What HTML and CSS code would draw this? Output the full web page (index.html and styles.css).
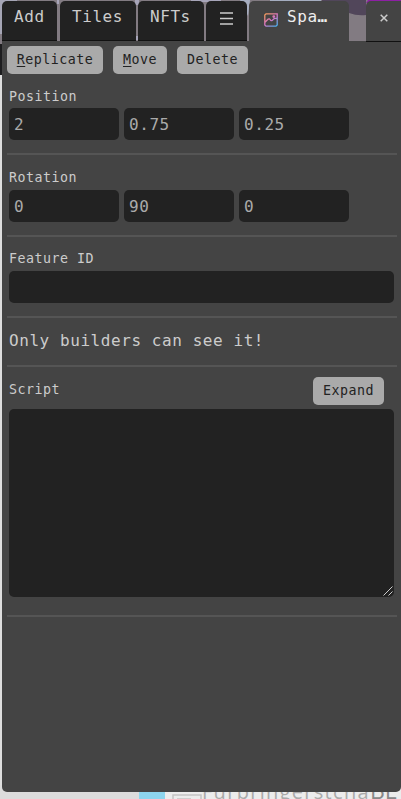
FILE: index.html
```
<!DOCTYPE html>
<html lang="en">
<head>
<meta charset="utf-8">
<title>Feature editor</title>
<link rel="stylesheet" href="styles.css">
</head>
<body>
<div class="scene">
  <svg class="sky" width="401" height="42" viewBox="0 0 401 42">
    <rect width="401" height="42" fill="#827b82"/>
    <path d="M0 0h17v4L3 20v14H0z" fill="#a5a5b5"/>
    <path d="M57 0h2v4h-2zM135 0h4v5h-4zM135 36h4v4h-4zM191 0h30v2h-30z" fill="#a7a5b9"/>
    <path d="M240 0h10l-2 16zM270 0h51v2h-51z" fill="#a5adc0"/>
    <path d="M322 0h44v15q-9 1-17-2l-27-9z" fill="#51465a"/>
    <path d="M368 0h33v3h-35z" fill="#8d20a4"/>
  </svg>
  <div class="ground">
    <span class="water"></span>
    <svg class="block" width="30" height="7" viewBox="0 0 30 7"><path d="M1 7V3h28v4M5 7h14" fill="none" stroke="#c4c4c4" stroke-width="1.5"/></svg>
    <span class="street">Furbringerstcha</span><span class="city">BE</span>
  </div>
</div>
<main class="panel">
  <nav class="tabs">
    <span class="tab add">Add</span>
    <span class="tab tiles">Tiles</span>
    <span class="tab nfts">NFTs</span>
    <span class="tab menu"><svg width="14" height="13" viewBox="0 0 14 13"><path d="M0 1h13M0 6.5h13M0 12h13" stroke="#ccc" stroke-width="1.6"/></svg></span>
    <span class="tab active">
      <svg width="14" height="14" viewBox="0 0 14 14" fill="none" stroke="url(#g)" stroke-width="1.3">
        <defs><linearGradient id="g" gradientUnits="userSpaceOnUse" x1="1" y1="0" x2="12" y2="14"><stop offset="0" stop-color="#f6a04e"/><stop offset=".5" stop-color="#d974c4"/><stop offset="1" stop-color="#42b3ef"/></linearGradient></defs>
        <path d="M2 .8h11.2v11.2l-1.2 1.2H2L.8 12V2zM1 9.3l3.2-3.2q1.3-.8 2 .6t2 .8l2-2 3 -.3"/><circle cx="9.8" cy="3.6" r=".8"/>
      </svg>
      <span class="title">Spa<span class="dots">…</span></span>
    </span>
    <span class="tab close"><svg width="8" height="8" viewBox="0 0 8 8"><path d="M.7.7l6.6 6.6M7.3.7L.7 7.3" stroke="#ccc" stroke-width="1.5"/></svg></span>
  </nav>
  <div class="body">
    <div class="actions">
      <button class="btn replicate"><u>R</u>eplicate</button>
      <button class="btn move"><u>M</u>ove</button>
      <button class="btn delete">Delete</button>
    </div>
    <section class="field position">
      <label>Position</label>
      <div class="inputs"><input value="2"><input value="0.75"><input value="0.25"></div>
    </section>
    <section class="field rotation">
      <label>Rotation</label>
      <div class="inputs"><input value="0"><input value="90"><input value="0"></div>
    </section>
    <section class="field feature">
      <label>Feature ID</label>
      <div class="inputs"><input class="wide"></div>
    </section>
    <p class="note">Only builders can see it!</p>
    <section class="script">
      <div class="script-head"><label>Script</label><button class="btn expand">Expand</button></div>
      <div class="editor"><svg width="10" height="10" viewBox="0 0 10 10"><path d="M.5 9.5l9-9M5.5 9.5l4-4" stroke="#ccc" stroke-width="1"/></svg></div>
    </section>
  </div>
</main>
</body>
</html>
```
FILE: styles.css
```
* { box-sizing: border-box; }
body {
  margin: 0;
  width: 401px;
  height: 799px;
  overflow: hidden;
  position: relative;
  background: linear-gradient(#827b82 44px, #1d1d1f 44px, #1d1d1f 75px, #dedede 75px);
  font-family: "DejaVu Sans Mono", monospace;
  font-size: 16px;
  letter-spacing: 0.57px;
  color: #ccc;
}
.scene { position: absolute; inset: 0; }
.sky { display: block; }
.ground {
  position: absolute;
  left: 0;
  top: 785px;
  width: 401px;
  height: 14px;
  overflow: hidden;
  display: flex;
  background: linear-gradient(90deg, #dcdcdc 164px, #ececec 164px);
}
.water { margin-left: 139px; width: 26px; background: #8dd5ee; }
.block { margin: 7px 0 0 7px; }
.street, .city {
  font-family: "Open Sans", sans-serif;
  line-height: 20px;
  margin-top: -3px;
  white-space: nowrap;
  color: #aaa;
}
.street { font-size: 20px; width: 168px; letter-spacing: 1.3px; }
.city { font-size: 23px; color: #888; margin-top: -5px; letter-spacing: 0; }
.panel { position: relative; margin-left: 2px; padding-top: 1px; }
.tabs { display: flex; height: 40px; }
.tab {
  height: 40px;
  background: #222;
  border-radius: 5px 5px 0 0;
  border-bottom: 1px solid #111;
  display: flex;
  justify-content: flex-start;
  line-height: 20px;
  padding-top: 6px;
  padding-left: 12px;
}
.add { width: 55px; margin-right: 3px; }
.tiles { width: 76px; margin-right: 2px; }
.nfts { width: 66px; margin-right: 2px; }
.menu { width: 41px; margin-right: 2px; padding: 11px 0 0 14px; }
.active {
  width: 100px;
  margin-right: 17px;
  background: #444;
  border: 0;
  color: #eee;
  padding-left: 15px;
}
.active svg { margin: 6px 8px 0 0; }
.active .title { margin-left: 1px; }
.dots { font-weight: bold; }
.close { width: 35px; height: 41px; background: #444; border-radius: 5px 0 0; padding: 13px 0 0 14px; }
.body {
  height: 751px;
  background: #444;
  border-radius: 0 0 5px 5px;
  padding: 5px 4px 0 5px;
}
.actions { display: flex; gap: 10px; height: 28px; }
.btn {
  height: 28px;
  border: 0;
  border-radius: 5px;
  padding: 0;
  background: #aaa;
  color: #222;
  font: 13.3px/28px "DejaVu Sans Mono", monospace;
  letter-spacing: 0.5px;
  text-align: center;
}
.btn u { text-underline-offset: 2px; }
.replicate { width: 96px; }
.move { width: 54px; }
.delete { width: 71px; }
.field { border-bottom: 2px solid #555; padding-left: 2px; }
.field label { display: block; height: 22px; line-height: 20px; }
label { font-size: 13.3px; letter-spacing: 0.5px; }
.inputs { display: flex; gap: 5px; }
.position { height: 81px; padding-top: 13px; }
.position label { height: 21px; }
.rotation { height: 82px; padding-top: 13px; }
.feature { height: 81px; padding-top: 12px; }
input {
  width: 110px;
  height: 32px;
  border: 0;
  border-radius: 5px;
  padding: 1px 5px;
  background: #222;
  color: #aaa;
  font: 16px "DejaVu Sans Mono", monospace;
  letter-spacing: 0.57px;
}
.wide { width: 385px; }
.note { height: 49px; margin: 0; padding: 13px 0 0 2px; line-height: 20px; border-bottom: 2px solid #555; }
.script { height: 250px; border-bottom: 2px solid #555; padding: 10px 0 0 2px; }
.script-head { height: 32px; display: flex; justify-content: space-between; padding-right: 13px; }
.script label { line-height: 26px; }
.expand { width: 71px; }
.editor {
  width: 385px;
  height: 188px;
  background: #222;
  border-radius: 5px;
  display: flex;
  justify-content: flex-end;
  align-items: flex-end;
  padding: 0 1px 1px 0;
}
```
